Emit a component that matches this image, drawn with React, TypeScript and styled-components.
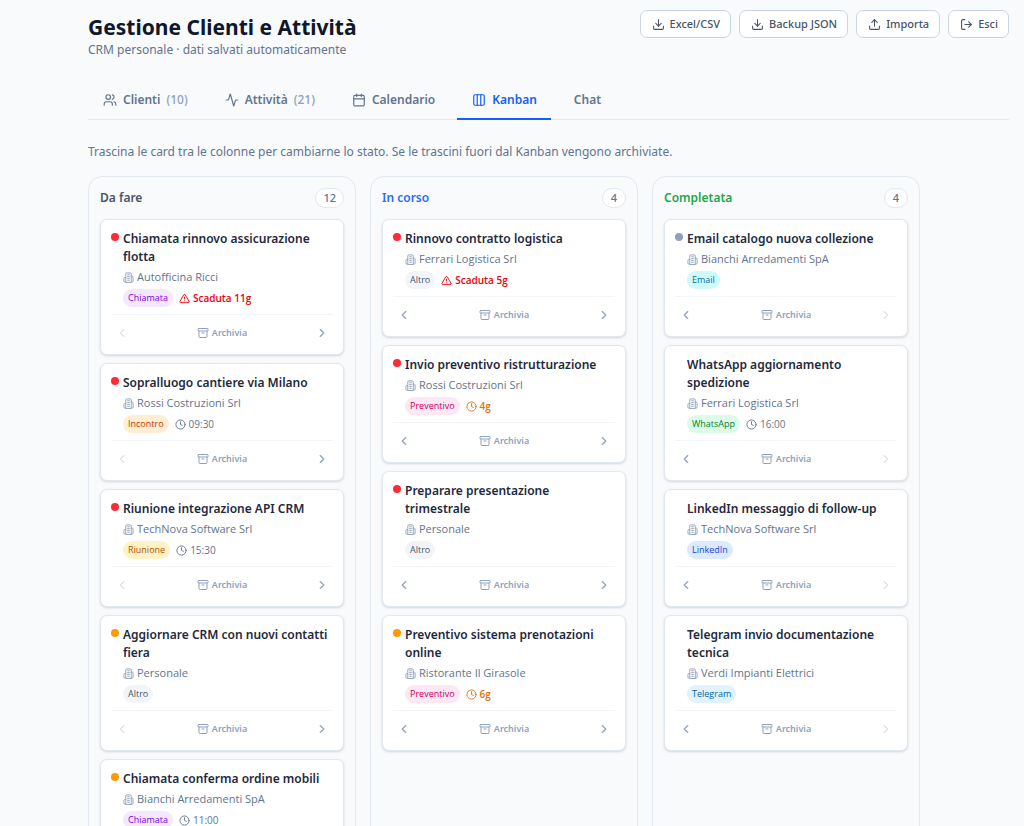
import React from 'react';
import styled, { createGlobalStyle, css } from 'styled-components';
import {
  Activity,
  AlertTriangle,
  Archive,
  Calendar,
  ChevronLeft,
  ChevronRight,
  Clock,
  Columns3,
  Download,
  LogOut,
  Upload,
  Users,
} from 'lucide-react';

const GlobalStyle = createGlobalStyle`
  *, *::before, *::after { box-sizing: border-box; }
  body {
    margin: 0;
    background: #f8fafc;
    color: #1d293d;
    font-family: 'Noto Sans', 'Open Sans', sans-serif;
    font-size: 12px;
    line-height: 18px;
  }
  h1, h2, h3, p, ul { margin: 0; padding: 0; }
  button { font: inherit; cursor: pointer; }
  svg { flex-shrink: 0; display: block; }
`;

const Page = styled.div`
  min-height: 100vh;
  padding: 10px 15px 24px 88px;
`;

const Header = styled.header`
  display: flex;
  justify-content: space-between;
  align-items: flex-start;
  gap: 16px;
`;

const Title = styled.h1`
  padding-top: 3px;
  font-size: 21px;
  line-height: 28px;
  font-weight: 700;
  color: #0f172b;
`;

const Subtitle = styled.p`
  color: #62748e;
`;

const Actions = styled.div`
  display: flex;
  gap: 8px;
`;

const ActionButton = styled.button`
  display: flex;
  align-items: center;
  gap: 5px;
  height: 28px;
  padding: 0 10px 0 11px;
  border: 1px solid #cad5e2;
  border-radius: 7px;
  background: #fff;
  color: #45556c;
  font-size: 11px;
  font-weight: 500;
  white-space: nowrap;
`;

const Tabs = styled.nav`
  display: flex;
  gap: 8px;
  margin-top: 20px;
  border-bottom: 1px solid #e2e8f0;
`;

const Tab = styled.button<{ $active?: boolean }>`
  display: flex;
  align-items: center;
  gap: 6px;
  height: 41px;
  margin-bottom: -1px;
  padding: 2px 14px 0 15px;
  border: 0;
  border-bottom: 2px solid ${(p) => (p.$active ? '#155dfc' : 'transparent')};
  background: none;
  color: ${(p) => (p.$active ? '#155dfc' : '#62748e')};
  font-weight: 600;
`;

const TabCount = styled.span`
  font-weight: 500;
  color: #90a1b9;
`;

const Hint = styled.p`
  margin-top: 23px;
  color: #62748e;
`;

const Board = styled.main`
  display: flex;
  gap: 14px;
  margin-top: 15px;
`;

const Column = styled.section`
  flex: 0 0 268px;
  padding: 11px;
  border: 1px solid #e2e8f0;
  border-radius: 14px;
`;

const ColumnHeader = styled.div`
  display: flex;
  align-items: center;
  justify-content: space-between;
  margin-bottom: 11px;
`;

const ColumnTitle = styled.h2<{ $color: string }>`
  font-size: 12px;
  font-weight: 600;
  color: ${(p) => p.$color};
`;

const CountBadge = styled.span`
  min-width: 24px;
  padding: 0 7px;
  border: 1px solid #e2e8f0;
  border-radius: 10px;
  background: #fff;
  color: #62748e;
  font-size: 11px;
  font-weight: 500;
  text-align: center;
`;

const CardList = styled.ul`
  display: flex;
  flex-direction: column;
  gap: 8px;
  list-style: none;
`;

const CardBox = styled.li`
  padding: 10px;
  border: 1px solid #e2e8f0;
  border-radius: 7px;
  background: #fff;
  box-shadow: 0 1px 3px rgba(0, 0, 0, 0.1), 0 1px 2px rgba(0, 0, 0, 0.06);
`;

const CardMain = styled.div`
  display: flex;
  gap: 4px;
`;

const Dot = styled.span<{ $color: string }>`
  flex: 0 0 8px;
  height: 8px;
  margin-top: 3px;
  border-radius: 50%;
  background: ${(p) => p.$color};
`;

const CardBody = styled.div`
  flex: 1;
  min-width: 0;
`;

const CardTitle = styled.h3`
  font-size: 12px;
  line-height: 18px;
  font-weight: 600;
  color: #1d293d;
`;

const Client = styled.p`
  display: flex;
  align-items: center;
  gap: 3px;
  margin-top: 3px;
  font-family: 'Open Sans', 'Noto Sans', sans-serif;
  font-size: 11px;
  line-height: 16px;
  color: #62748e;

  svg { color: #90a1b9; }
`;

const Meta = styled.div`
  display: flex;
  align-items: center;
  gap: 6px;
  height: 18px;
  margin-top: 4px;
  font-family: 'Open Sans', 'Noto Sans', sans-serif;
`;

const tagColors = {
  Chiamata: ['#f3e8ff', '#8200db'],
  Incontro: ['#ffedd4', '#ca3500'],
  Riunione: ['#fef3c6', '#bb4d00'],
  Altro: ['#f1f5f9', '#45556c'],
  Preventivo: ['#fce7f3', '#c6005c'],
  Email: ['#cefafe', '#007595'],
  WhatsApp: ['#dcfce7', '#008236'],
  LinkedIn: ['#dbeafe', '#1447e6'],
  Telegram: ['#dff2fe', '#0069a8'],
};

type TagName = keyof typeof tagColors;

const Tag = styled.span<{ $tag: TagName }>`
  padding: 0 5px;
  border-radius: 9px;
  background: ${(p) => tagColors[p.$tag][0]};
  color: ${(p) => tagColors[p.$tag][1]};
  font-size: 9px;
  line-height: 18px;
  font-weight: 500;
`;

const tones = {
  time: css`color: #62748e;`,
  late: css`color: #e7000b; font-weight: 600;`,
  soon: css`color: #e17100; font-weight: 600;`,
};

type Tone = keyof typeof tones;

const Due = styled.span<{ $tone: Tone }>`
  display: flex;
  align-items: center;
  gap: 3px;
  font-size: 10px;
  ${(p) => tones[p.$tone]}
`;

const CardFooter = styled.div`
  display: flex;
  align-items: center;
  justify-content: space-between;
  margin-top: 7px;
  padding-top: 7px;
  border-top: 1px solid #f1f5f9;
`;

const FooterButton = styled.button`
  display: flex;
  align-items: center;
  justify-content: center;
  gap: 3px;
  min-width: 22px;
  height: 22px;
  padding: 0;
  border: 0;
  background: none;
  color: #90a1b9;
  font-size: 9px;
  font-weight: 600;

  &:disabled { opacity: 0.3; cursor: default; }
`;

const RED = '#fb2c36';
const AMBER = '#fe9a00';
const SLATE = '#90a1b9';

type CardData = {
  title: string;
  client: string;
  tag: TagName;
  dot?: string;
  due?: string;
  tone?: Tone;
};

const columns: { name: string; color: string; count: number; cards: CardData[] }[] = [
  {
    name: 'Da fare',
    color: '#45556c',
    count: 12,
    cards: [
      { title: 'Chiamata rinnovo assicurazione flotta', client: 'Autofficina Ricci', tag: 'Chiamata', dot: RED, due: 'Scaduta 11g', tone: 'late' },
      { title: 'Sopralluogo cantiere via Milano', client: 'Rossi Costruzioni Srl', tag: 'Incontro', dot: RED, due: '09:30', tone: 'time' },
      { title: 'Riunione integrazione API CRM', client: 'TechNova Software Srl', tag: 'Riunione', dot: RED, due: '15:30', tone: 'time' },
      { title: 'Aggiornare CRM con nuovi contatti fiera', client: 'Personale', tag: 'Altro', dot: AMBER },
      { title: 'Chiamata conferma ordine mobili', client: 'Bianchi Arredamenti SpA', tag: 'Chiamata', dot: AMBER, due: '11:00', tone: 'time' },
    ],
  },
  {
    name: 'In corso',
    color: '#2b6bff',
    count: 4,
    cards: [
      { title: 'Rinnovo contratto logistica', client: 'Ferrari Logistica Srl', tag: 'Altro', dot: RED, due: 'Scaduta 5g', tone: 'late' },
      { title: 'Invio preventivo ristrutturazione', client: 'Rossi Costruzioni Srl', tag: 'Preventivo', dot: RED, due: '4g', tone: 'soon' },
      { title: 'Preparare presentazione trimestrale', client: 'Personale', tag: 'Altro', dot: RED },
      { title: 'Preventivo sistema prenotazioni online', client: 'Ristorante Il Girasole', tag: 'Preventivo', dot: AMBER, due: '6g', tone: 'soon' },
    ],
  },
  {
    name: 'Completata',
    color: '#1ca64a',
    count: 4,
    cards: [
      { title: 'Email catalogo nuova collezione', client: 'Bianchi Arredamenti SpA', tag: 'Email', dot: SLATE },
      { title: 'WhatsApp aggiornamento spedizione', client: 'Ferrari Logistica Srl', tag: 'WhatsApp', due: '16:00', tone: 'time' },
      { title: 'LinkedIn messaggio di follow-up', client: 'TechNova Software Srl', tag: 'LinkedIn' },
      { title: 'Telegram invio documentazione tecnica', client: 'Verdi Impianti Elettrici', tag: 'Telegram' },
    ],
  },
];

function BuildingIcon() {
  return (
    <svg
      width="11"
      height="11"
      viewBox="0 0 24 24"
      fill="none"
      stroke="currentColor"
      strokeWidth="2"
      strokeLinecap="round"
      strokeLinejoin="round"
      aria-hidden="true"
    >
      <path d="M6 22V4a2 2 0 0 1 2-2h8a2 2 0 0 1 2 2v18Z" />
      <path d="M6 12H4a2 2 0 0 0-2 2v6a2 2 0 0 0 2 2h2" />
      <path d="M18 9h2a2 2 0 0 1 2 2v9a2 2 0 0 1-2 2h-2" />
      <path d="M10 6h4M10 10h4M10 14h4M10 18h4" />
    </svg>
  );
}

function Card({ card, first, last }: { card: CardData; first: boolean; last: boolean }) {
  const DueIcon = card.tone === 'late' ? AlertTriangle : Clock;
  return (
    <CardBox draggable>
      <CardMain>
        <Dot $color={card.dot ?? 'transparent'} />
        <CardBody>
          <CardTitle>{card.title}</CardTitle>
          <Client>
            <BuildingIcon />
            {card.client}
          </Client>
          <Meta>
            <Tag $tag={card.tag}>{card.tag}</Tag>
            {card.due && card.tone && (
              <Due $tone={card.tone}>
                <DueIcon size={11} />
                {card.due}
              </Due>
            )}
          </Meta>
        </CardBody>
      </CardMain>
      <CardFooter>
        <FooterButton aria-label="Sposta a sinistra" disabled={first}>
          <ChevronLeft size={14} />
        </FooterButton>
        <FooterButton>
          <Archive size={12} />
          Archivia
        </FooterButton>
        <FooterButton aria-label="Sposta a destra" disabled={last}>
          <ChevronRight size={14} />
        </FooterButton>
      </CardFooter>
    </CardBox>
  );
}

export default function App() {
  return (
    <>
      <GlobalStyle />
      <Page>
        <Header>
          <div>
            <Title>Gestione Clienti e Attività</Title>
            <Subtitle>CRM personale · dati salvati automaticamente</Subtitle>
          </div>
          <Actions>
            <ActionButton><Download size={13} />Excel/CSV</ActionButton>
            <ActionButton><Download size={13} />Backup JSON</ActionButton>
            <ActionButton><Upload size={13} />Importa</ActionButton>
            <ActionButton><LogOut size={13} />Esci</ActionButton>
          </Actions>
        </Header>
        <Tabs>
          <Tab><Users size={14} />Clienti <TabCount>(10)</TabCount></Tab>
          <Tab><Activity size={14} />Attività <TabCount>(21)</TabCount></Tab>
          <Tab><Calendar size={14} />Calendario</Tab>
          <Tab $active><Columns3 size={14} />Kanban</Tab>
          <Tab>Chat</Tab>
        </Tabs>
        <Hint>Trascina le card tra le colonne per cambiarne lo stato. Se le trascini fuori dal Kanban vengono archiviate.</Hint>
        <Board>
          {columns.map((column, i) => (
            <Column key={column.name}>
              <ColumnHeader>
                <ColumnTitle $color={column.color}>{column.name}</ColumnTitle>
                <CountBadge>{column.count}</CountBadge>
              </ColumnHeader>
              <CardList>
                {column.cards.map((card) => (
                  <Card key={card.title} card={card} first={i === 0} last={i === columns.length - 1} />
                ))}
              </CardList>
            </Column>
          ))}
        </Board>
      </Page>
    </>
  );
}
